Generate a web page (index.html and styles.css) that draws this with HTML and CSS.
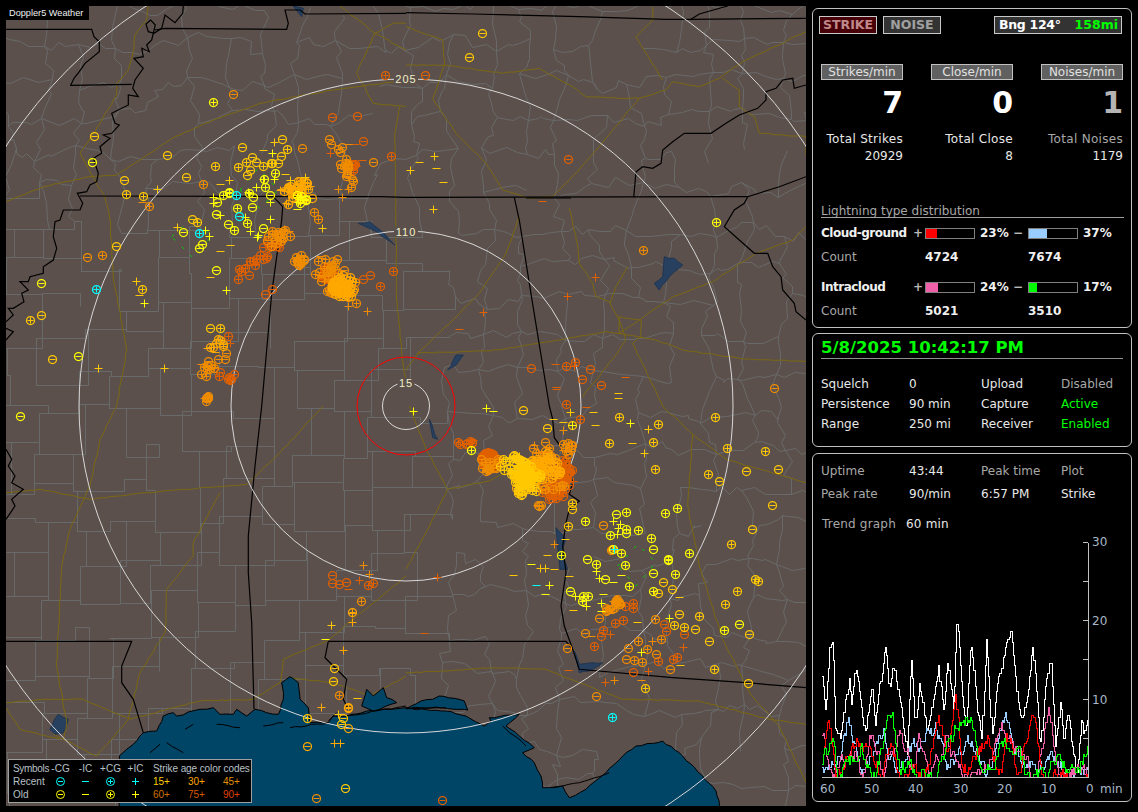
FILE: index.html
```html
<!DOCTYPE html>
<html lang="en">
<head>
    <meta charset="UTF-8">
    <title>Doppler5 Weather - Lightning</title>
    <link rel="stylesheet" href="styles.css">
</head>
<body>
    <div class="map-wrap">
        <svg id="map" class="map" width="800" height="800" viewBox="6 6 800 800"></svg>
        <div class="map-tag">Doppler5 Weather</div>
        <div class="legend">
            <span class="legend-first">Symbols</span><span class="mid">-CG</span><span class="mid">-IC</span><span class="mid">+CG</span><span class="mid">+IC</span><span class="age-title">Strike age color codes</span>
            <span>Recent</span>
            <svg class="sym recent" viewBox="0 0 11 11"><circle cx="5.5" cy="5.5" r="4"/><path d="M3 5.5h5"/></svg>
            <svg class="sym recent" viewBox="0 0 11 11"><path d="M2 5.5h7"/></svg>
            <svg class="sym recent" viewBox="0 0 11 11"><circle cx="5.5" cy="5.5" r="4"/><path d="M3 5.5h5M5.5 3v5"/></svg>
            <svg class="sym recent" viewBox="0 0 11 11"><path d="M2 5.5h7M5.5 2v7"/></svg>
            <span class="age a15">15+</span><span class="age a30">30+</span><span class="age a45">45+</span>
            <span>Old</span>
            <svg class="sym old" viewBox="0 0 11 11"><circle cx="5.5" cy="5.5" r="4"/><path d="M3 5.5h5"/></svg>
            <svg class="sym old" viewBox="0 0 11 11"><path d="M2 5.5h7"/></svg>
            <svg class="sym old" viewBox="0 0 11 11"><circle cx="5.5" cy="5.5" r="4"/><path d="M3 5.5h5M5.5 3v5"/></svg>
            <svg class="sym old" viewBox="0 0 11 11"><path d="M2 5.5h7M5.5 2v7"/></svg>
            <span class="age a60">60+</span><span class="age a75">75+</span><span class="age a90">90+</span>
        </div>
    </div>

    <div class="side">
        <section class="panel panel-counts">
            <div class="status-row">
                <span class="chip chip-strike">STRIKE</span>
                <span class="chip chip-noise">NOISE</span>
                <span class="chip chip-bearing"><span class="bearing">Bng 124°</span><span class="green">158mi</span></span>
            </div>
            <div class="rates">
                <div class="rate">
                    <div class="rate-label">Strikes/min</div>
                    <div class="rate-value">7</div>
                    <div class="rate-total">Total Strikes</div>
                    <div class="rate-count">20929</div>
                </div>
                <div class="rate">
                    <div class="rate-label">Close/min</div>
                    <div class="rate-value">0</div>
                    <div class="rate-total">Total Close</div>
                    <div class="rate-count">8</div>
                </div>
                <div class="rate rate-noise">
                    <div class="rate-label">Noises/min</div>
                    <div class="rate-value">1</div>
                    <div class="rate-total">Total Noises</div>
                    <div class="rate-count">1179</div>
                </div>
            </div>
            <div class="dist-title">Lightning type distribution</div>
            <div class="dist">
                <b class="dist-name">Cloud-ground</b><span class="sign">+</span><span class="bar"><i class="fill-red" style="width:11px"></i></span><b class="pct">23%</b><span class="sign sign-minus">−</span><span class="bar"><i class="fill-blue" style="width:18px"></i></span><b class="pct">37%</b>
                <span class="muted">Count</span><span></span><b>4724</b><span></span><span></span><b>7674</b><span></span>
                <div class="dist-gap"></div>
                <b class="dist-name">Intracloud</b><span class="sign">+</span><span class="bar"><i class="fill-pink" style="width:12px"></i></span><b class="pct">24%</b><span class="sign sign-minus">−</span><span class="bar"><i class="fill-green" style="width:8px"></i></span><b class="pct">17%</b>
                <span class="muted">Count</span><span></span><b>5021</b><span></span><span></span><b>3510</b><span></span>
            </div>
        </section>

        <section class="panel panel-status">
            <div class="clock">5/8/2025 10:42:17 PM</div>
            <div class="info">
                <span>Squelch</span><span>0</span><span>Upload</span><span class="muted">Disabled</span>
                <span>Persistence</span><span>90 min</span><span>Capture</span><span class="green">Active</span>
                <span>Range</span><span>250 mi</span><span>Receiver</span><span class="green">Enabled</span>
            </div>
        </section>

        <section class="panel panel-trend">
            <div class="info info-trend">
                <span class="muted">Uptime</span><span>43:44</span><span class="muted">Peak time</span><span class="muted">Plot</span>
                <span class="muted">Peak rate</span><span>90/min</span><span>6:57 PM</span><span>Strike</span>
            </div>
            <div class="trend-title"><span class="muted">Trend graph</span><span>60 min</span></div>
            <svg id="trend" class="trend" width="320" height="270" viewBox="812 533 320 270"></svg>
        </section>
    </div>
    <script src="script.js"></script>
</body>
</html>
```

FILE: styles.css
```css
* {
    box-sizing: border-box;
}
body {
    margin: 0;
    width: 1138px;
    height: 812px;
    overflow: hidden;
    background-color: #000000;
    color: #e8e8e8;
    font-family: "DejaVu Sans", Verdana, sans-serif;
    font-size: 12px;
    display: flex;
}
.green {
    color: #00ff00;
}
.muted {
    color: #a8a8a8;
}

/* map */
.map-wrap {
    position: relative;
    padding: 6px;
    width: 812px;
    height: 812px;
}
.map {
    display: block;
    background-color: #5c504c;
}
.map-tag {
    position: absolute;
    left: 6px;
    top: 6px;
    width: 83px;
    height: 14px;
    padding-left: 3px;
    background-color: #000000;
    color: #f0f0f0;
    font-family: "Liberation Sans", Arial, sans-serif;
    font-size: 9.2px;
    line-height: 14px;
}
.legend {
    position: absolute;
    left: 8px;
    top: 759px;
    width: 244px;
    height: 44px;
    padding: 2px 0 0 4px;
    background-color: #000000;
    border: 1px solid #a0a0a0;
    color: #b8c0c8;
    font-family: "Liberation Sans", Arial, sans-serif;
    font-size: 10px;
    display: grid;
    grid-template-columns: 35px 25px 25px 25px 25px 35px 35px 35px;
    grid-auto-rows: 13px;
    align-items: center;
}
.legend .mid {
    text-align: center;
}
.legend-first {
    letter-spacing: -0.3px;
}
.age-title {
    grid-column: 6 / 9;
    margin-left: 5px;
    white-space: nowrap;
    letter-spacing: -0.1px;
}
.age {
    margin-left: 5px;
}
.a15 { color: #ffcc00; }
.a30 { color: #ffa500; }
.a45 { color: #e09000; }
.a60 { color: #d07000; }
.a75 { color: #d85800; }
.a90 { color: #e04000; }
.sym {
    width: 11px;
    height: 11px;
    justify-self: center;
    fill: none;
    stroke-width: 1;
}
.sym.recent {
    stroke: #00ffff;
}
.sym.old {
    stroke: #ffff00;
}

/* side column */
.side {
    width: 320px;
    padding-top: 8px;
    display: flex;
    flex-direction: column;
    gap: 5px;
}
.panel {
    border: 1px solid #c0c0c0;
    border-radius: 6px;
    padding: 0 8px;
}
.panel-counts {
    height: 320px;
}
.status-row {
    display: flex;
    gap: 6px;
    margin: 7px 0 0 -2px;
}
.chip {
    height: 18px;
    border: 1px solid #c8c8c8;
    font-weight: bold;
    font-size: 12.5px;
    line-height: 16px;
    text-align: center;
}
.chip-strike {
    width: 58px;
    background-color: #480008;
    color: #c08888;
}
.chip-noise {
    width: 58px;
    background-color: #333333;
    color: #a0a0a0;
}
.chip-bearing {
    width: 128px;
    margin-left: 47px;
    padding: 0 3px 0 4px;
    background-color: #333333;
    color: #ffffff;
    display: flex;
    justify-content: space-between;
}
.bearing {
    letter-spacing: -0.3px;
}
.rates {
    display: grid;
    grid-template-columns: 82px 82px 82px;
    gap: 28px;
    margin-top: 30px;
}
.rate {
    text-align: right;
}
.rate-label {
    height: 16px;
    background-color: #606060;
    border: 1px solid #c0c0c0;
    text-align: center;
    line-height: 14px;
    color: #e0e0e0;
}
.rate-value {
    height: 46px;
    font-size: 30px;
    font-weight: bold;
    line-height: 46px;
    color: #ffffff;
}
.rate-total {
    margin-top: 5px;
    line-height: 17px;
    letter-spacing: 0.3px;
}
.rate-count {
    line-height: 17px;
}
.rate-noise .rate-value {
    color: #b4b4b4;
}
.rate-noise .rate-total {
    color: #a8a8a8;
}
.dist-title {
    margin-top: 39px;
    height: 14px;
    line-height: 15px;
    width: 303px;
    color: #a8a8a8;
    border-bottom: 1px solid #a0a0a0;
}
.dist {
    display: grid;
    grid-template-columns: 92px 12px 50px 44px 9px 50px auto;
    grid-template-rows: 24px 24px 6px 24px 24px;
    align-items: center;
    margin-top: 3px;
    color: #f0f0f0;
}
.dist-gap {
    grid-column: 1 / -1;
}
.dist-name {
    letter-spacing: -0.5px;
}
.pct {
    padding-left: 5px;
}
.sign {
    color: #b8b8b8;
    font-weight: bold;
}
.sign-minus {
    margin-left: -6px;
}
.bar {
    display: block;
    height: 11px;
    border: 1px solid #808080;
}
.bar i {
    display: block;
    height: 100%;
}
.fill-red { background-color: #ff0000; }
.fill-blue { background-color: #99ccff; }
.fill-pink { background-color: #f060a8; }
.fill-green { background-color: #00ff00; }
.panel-status {
    height: 114px;
}
.clock {
    height: 24px;
    margin-top: 1px;
    padding-top: 2px;
    width: 302px;
    color: #00ff00;
    font-size: 16.5px;
    font-weight: bold;
    line-height: 22px;
    border-bottom: 1px solid #909090;
}
.info {
    display: grid;
    grid-template-columns: 88px 72px 80px auto;
    grid-auto-rows: 20px;
    align-items: center;
    margin-top: 15px;
}
.panel-trend {
    height: 349px;
    margin-top: 1px;
    position: relative;
}
.info-trend {
    grid-auto-rows: 23px;
    margin-top: 5px;
}
.trend-title {
    display: flex;
    gap: 10px;
    margin: 8px 0 0 1px;
    line-height: 23px;
    letter-spacing: 0.2px;
}
.trend {
    position: absolute;
    left: -1px;
    top: 79px;
    font-size: 12px;
}
.trend path {
    shape-rendering: crispEdges;
}
```

FILE: script.js
```js
// Everything is traced from 3x crops of the four map quadrants, so coords are crop px
const NS = 'http://www.w3.org/2000/svg';
const QUAD = { nw: [0, 0], ne: [406, 0], sw: [0, 406], se: [406, 406] };

let seed = 20929;
function rnd() {
    seed = (seed * 16807) % 2147483647;
    return seed / 2147483647;
}

function addPath(svg, d, stroke, fill, width, extra) {
    const p = document.createElementNS(NS, 'path');
    p.setAttribute('d', d);
    p.setAttribute('stroke', stroke);
    p.setAttribute('fill', fill || 'none');
    p.setAttribute('stroke-width', width || 1);
    if (extra) Object.keys(extra).forEach(k => p.setAttribute(k, extra[k]));
    svg.appendChild(p);
    return p;
}

function points(q, str) {
    const [ox, oy] = QUAD[q];
    return str.trim().split(/\s+/).map(s => {
        const [x, y] = s.split(',').map(Number);
        return [ox + x / 3, oy + y / 3];
    });
}

// splits each segment and shakes it a little, so coasts and lakes don't look ruled
function roughen(pts, amount) {
    const out = [];
    pts.forEach((p, i) => {
        out.push(p);
        const n = pts[i + 1];
        if (!n) return;
        const len = Math.hypot(n[0] - p[0], n[1] - p[1]);
        const parts = Math.floor(len / 5);
        for (let k = 1; k < parts; k++) {
            out.push([
                p[0] + (n[0] - p[0]) * k / parts + (rnd() - 0.5) * amount,
                p[1] + (n[1] - p[1]) * k / parts + (rnd() - 0.5) * amount
            ]);
        }
    });
    return out;
}

function toPath(pts, close) {
    return 'M' + pts.map(p => p[0].toFixed(1) + ' ' + p[1].toFixed(1)).join('L') + (close ? 'Z' : '');
}

const map = document.getElementById('map');

// counties: jittered grid, ruled in the west, wobbly toward the east
function drawCounties() {
    const step = 37;
    const nodes = {};
    for (let i = 0; i <= 22; i++) {
        for (let j = 0; j <= 22; j++) {
            nodes[i + ',' + j] = [i * step + (rnd() - 0.5) * 20, j * step + (rnd() - 0.5) * 20];
        }
    }
    let d = '';
    function edge(a, b) {
        d += 'M' + a[0].toFixed(0) + ' ' + a[1].toFixed(0);
        if (a[0] < 420 && a[1] > 190) {
            d += 'L' + b[0].toFixed(0) + ' ' + a[1].toFixed(0) + 'L' + b[0].toFixed(0) + ' ' + b[1].toFixed(0);
            return;
        }
        for (let k = 1; k <= 4; k++) {
            const wob = k === 4 ? 0 : 10;
            const x = a[0] + (b[0] - a[0]) * k / 4 + (rnd() - 0.5) * wob;
            const y = a[1] + (b[1] - a[1]) * k / 4 + (rnd() - 0.5) * wob;
            d += 'L' + x.toFixed(0) + ' ' + y.toFixed(0);
        }
    }
    for (let i = 0; i < 22; i++) {
        for (let j = 0; j < 22; j++) {
            if (rnd() < 0.8) edge(nodes[i + ',' + j], nodes[(i + 1) + ',' + j]);
            if (rnd() < 0.8) edge(nodes[i + ',' + j], nodes[i + ',' + (j + 1)]);
        }
    }
    addPath(map, d, '#686a6a', 'none', 1, { transform: 'translate(6.5 6.5)' });
}

const ROADS = {
    nw: ['445,18 440,60 405,105 400,155 385,210 350,250 350,285 300,370 240,460 275,525 315,590 330,660 340,830 380,1050 350,1218',
        '18,605 130,560 270,530 350,525 525,410 640,360 780,310 1000,270 1218,240',
        '1218,320 1120,310 1070,220 1125,100 1180,70 1218,70',
        '1020,18 1125,100 1218,150', '1200,320 1185,400 1190,900 1210,1100 1218,1140'],
    ne: ['0,80 110,120 115,195 80,295 150,400 240,490 290,570 370,595 440,590 490,540 580,440 700,295 780,270 800,245 880,260 940,235 1010,185 1200,95',
        '0,195 115,195 290,220 400,205 500,260 540,290 640,295 700,295',
        '740,20 740,60 690,110 770,240', '950,235 1000,270 1000,320 1045,350 1060,400 1200,410 1200,465',
        '340,650 300,760 220,880 140,960 35,1060 0,1110', '490,625 515,735 520,790 560,850 570,890 610,905 640,960 660,1020 640,1050 530,1190',
        '665,800 630,860 612,910', '35,1060 280,1050 600,995 750,1020 830,1050 1000,1075 1200,1085',
        '1200,680 1160,720 1050,760 920,845 800,890 700,960 640,1000 640,950 705,960 705,1010 680,1030 770,1218'],
    sw: ['350,0 300,100 270,240 210,370 185,480 170,780 200,950 190,1000',
        '18,260 120,250 270,280 440,260 740,235 830,150 970,0', '660,260 580,410 580,450 500,550 495,680 420,800 385,940 290,1050 160,985',
        '18,890 130,880 250,880 390,940 600,885 760,880 840,830 850,760 980,705 1120,590 1218,510',
        '870,815 1000,830 1110,870 1218,810', '18,905 60,970 180,1000'],
    se: ['0,800 120,795 260,785 420,790 520,830 650,880 880,885 1090,940 1200,955',
        '125,250 100,300 60,380 0,490', '770,0 860,85 845,300 880,480 950,700 1030,860 1120,960 1200,1130',
        '860,85 960,160 1200,230', '10,0 60,130 125,250 250,225 330,180 420,160']
};

const STATES = {
    nw: ['18,88 275,88 282,110 298,125 298,155 255,190 238,215 222,235 212,256 395,253',
        '550,18 548,40 525,68 495,45 485,85 462,100 445,95 438,72 452,60 466,75 455,120 440,135 448,155 425,145 430,170 402,175 430,205 405,240 398,265 415,290 385,285 385,315 335,340 345,370 358,375 335,400 310,405 330,415 300,440 305,460 280,475 295,520 290,545 270,555 260,575 232,580 248,610 240,630 190,630 180,660 165,665 160,710 170,745 160,780 130,800 130,820 90,830 85,845 60,845 85,870 65,880 72,905 40,925 25,925 40,945 18,965',
        '18,985 40,995 18,1020', '465,90 495,85 860,88 865,70 855,30 900,30 915,42 1218,40',
        '240,588 1140,590 1218,592', '820,590 848,620 845,660 830,770 815,880 785,1218'],
    ne: ['0,38 200,42 520,50 780,58 850,58 1200,55', '855,58 880,42 965,18', '0,592 1025,590 1120,560 1200,530',
        '360,594 495,594', '325,592 340,660 370,850 430,1218',
        '683,592 690,515 710,500 740,505 765,490 770,450 800,425 835,400 915,400 960,370 1000,345 1055,325 1080,300 1080,275 1110,265 1130,240 1160,235 1165,265 1200,255',
        '1025,590 1015,610 985,630 955,680 1000,720 1045,760 1085,760 1100,800 1125,830 1130,870 1165,910 1170,935 1200,960'],
    sw: ['785,0 765,180 745,390 745,500 755,650 762,910', '18,706 395,706 365,780 365,830 400,880 430,980',
        '18,130 35,160 25,180 45,210 35,230 70,250 35,280 45,300 18,340', '985,706 1218,706', '985,706 975,755 1040,820 1030,880 1045,910'],
    se: ['0,706 480,706 500,730 520,790 800,815 1020,830 1200,845',
        '430,0 440,40 445,95 470,130 500,230 490,265 520,285 490,310 480,350 470,420 480,500 465,600 475,660 500,730']
};

// the gulf crosses two quadrants: west coast, then east coast, closed along the bottom
const GULF_W = '358,1218 358,1050 380,1030 400,1015 430,980 470,975 490,930 520,920 530,930 600,910 640,905 660,925 700,925 710,910 740,930 765,910 800,920 835,925 850,880 845,830 870,812 895,830 900,880 925,905 930,950 985,950 1000,930 1040,930 1100,915 1218,905';
const GULF_E = '0,908 120,915 180,930 235,960 255,945 250,935 340,925 300,960 340,990 385,1025 350,1040 385,1070 405,1110 410,1145 430,1145 470,1140 490,1175 540,1150 600,1100 650,1050 690,1020 770,1005 830,1050 890,1110 930,1155 945,1218';
const BAYS = [
    ['sw', '1085,900 1100,850 1120,870 1150,845 1160,875 1190,890 1120,915'],
    ['se', '0,908 45,885 80,880 100,870 175,885 185,912 110,905']
];

const LAKES = {
    nw: ['1075,670 1110,665 1140,690 1185,735 1130,695', '880,18 905,50 910,25'],
    ne: ['775,770 805,775 830,795 790,830 760,870 745,850 770,830', '125,1110 150,1065 172,1065 150,1095'],
    sw: ['150,970 175,925 205,940 190,980 165,985'],
    se: ['70,40 82,70 95,100 80,95', '450,365 480,400 465,440 485,490 462,490', '505,735 520,775 560,770 590,770 550,795 520,800']
};

// land slivers and barrier islands inside the gulf
const ISLANDS = {
    sw: ['650,955 720,965', '790,960 850,950', '555,970 580,955', '870,965 985,950', '500,1010 550,1040', '450,1040 480,1015', '1040,930 1218,900', '985,945 1010,920'],
    se: ['0,905 120,905', '290,960 360,1020', '440,1145 520,1130 610,1100']
};

function drawMapLines() {
    Object.keys(LAKES).forEach(q => LAKES[q].forEach(s => {
        addPath(map, toPath(roughen(points(q, s), 1.5), true), '#1f3550', '#27405f');
    }));
    Object.keys(ROADS).forEach(q => ROADS[q].forEach(s => {
        addPath(map, toPath(roughen(points(q, s), 1)), '#7a6810');
    }));
    const gulf = roughen(points('sw', GULF_W).concat(points('se', GULF_E)), 1.5);
    addPath(map, toPath(gulf, true), '#000000', '#004466');
    BAYS.forEach(b => addPath(map, toPath(roughen(points(b[0], b[1]), 1.5), true), '#000000', '#004466'));
    Object.keys(ISLANDS).forEach(q => ISLANDS[q].forEach(s => {
        addPath(map, toPath(roughen(points(q, s), 1.5)), '#000000');
    }));
    Object.keys(STATES).forEach(q => STATES[q].forEach(s => {
        addPath(map, toPath(points(q, s)), '#000000', 'none', 1.2);
    }));
}

function drawRings() {
    const rings = [[23.5, '#d8d8d8'], [49, '#ff0000'], [175, '#d8d8d8'], [327, '#d8d8d8'], [477, '#d8d8d8']];
    rings.forEach(r => {
        const c = document.createElementNS(NS, 'circle');
        c.setAttribute('cx', 406);
        c.setAttribute('cy', 406);
        c.setAttribute('r', r[0]);
        c.setAttribute('fill', 'none');
        c.setAttribute('stroke', r[1]);
        map.appendChild(c);
    });
    [['15', 383], ['110', 232], ['205', 79]].forEach(l => {
        const w = l[0].length * 7 + 3;
        const bg = document.createElementNS(NS, 'rect');
        bg.setAttribute('x', 406 - w / 2);
        bg.setAttribute('y', l[1] - 5);
        bg.setAttribute('width', w);
        bg.setAttribute('height', 10);
        bg.setAttribute('fill', '#5c504c');
        map.appendChild(bg);
        const t = document.createElementNS(NS, 'text');
        t.setAttribute('x', 406);
        t.setAttribute('y', l[1] + 4);
        t.setAttribute('text-anchor', 'middle');
        t.setAttribute('fill', '#f0f0c8');
        t.setAttribute('font-family', 'Liberation Sans');
        t.setAttribute('font-size', '11');
        t.setAttribute('letter-spacing', '1');
        t.textContent = l[0];
        map.appendChild(t);
    });
    [['nw', '515,710 580,650 635,710 575,770'], ['nw', '720,570 775,505 835,570 780,625'], ['se', '635,480 695,415 750,470 690,540']].forEach(g => {
        addPath(map, toPath(points(g[0], g[1]), true), '#00d000', 'none', 1, { 'stroke-dasharray': '3 9' });
    });
}

const COLORS = { Y: '#ffff00', G: '#ffc800', A: '#ffa800', O: '#f08c00', D: '#e06000', C: '#00ffff' };
const ORDER = ['D', 'O', 'A', 'G', 'Y', 'C'];

// p circle-plus, m circle-minus, + plus, - minus
function addGlyph(out, kind, x, y) {
    x = Math.round(x) + 0.5;
    y = Math.round(y) + 0.5;
    if (kind === 'p' || kind === 'm') {
        out.rings += 'M' + (x - 4) + ' ' + y + 'a4 4 0 1 0 8 0a4 4 0 1 0 -8 0';
        out.lines += 'M' + (x - 3) + ' ' + y + 'h6';
        if (kind === 'p') out.lines += 'M' + x + ' ' + (y - 3) + 'v6';
    } else {
        out.lines += 'M' + (x - 4) + ' ' + y + 'h8';
        if (kind === '+') out.lines += 'M' + x + ' ' + (y - 4) + 'v8';
    }
}

const STRIKES = {
    nw: {
        D: 'm997,350 m1070,349 m1090,424 p1172,468 p1180,812 p1141,858 m1110,826 m1088,838 m795,883 m815,868 p715,838 m748,826 +989,460 p1156,226 -1065,432 -1085,481 p685,1008 +690,1028',
        O: 'p610,553 m700,283 p448,617 m907,445 p307,764 m262,772 +1102,932 +1045,917 +1015,568 m1120,487 +1025,590 m988,417 m994,432 m1025,440 p943,637 p955,658 -425,605',
        G: 'm283,407 m500,465 m373,541 p379,583 p430,589 +472,568 m348,737 m157,1078 p91,961 m124,946 m557,532 p646,498 m727,440 m757,472 p737,487 p715,502 m768,487 m750,510 m742,525 p790,497 p812,489 p815,490 m835,490 m843,468 p862,448 m847,416 +295,1105 +493,1105 +408,842 -418,885 p661,985 m631,985 -660,552 -790,450 -855,522 -690,735 -660,753 +870,540 +915,530 +823,425 +965,685 +530,680 m575,658 p590,665 -630,832 p427,868 +687,540',
        Y: 'p640,306 m275,487 m124,850 m235,1067 +679,871 m649,810 p703,690 m685,673 +749,693 +771,710 +774,706 +809,656 m790,683 p740,670 +660,645 m649,643 m650,606 p670,585 p688,575 m687,580 +640,590 +638,610 m756,620 +735,650 p712,625 +745,575 p748,578 +768,560 m758,590 +790,538 p792,538 p795,562 m810,585 +810,605 +822,538 +817,460 p825,520 +900,590 +895,605 -890,627 m550,695 +615,690 +628,707 m605,733 m598,745 +433,910',
        C: 'p289,866 p598,700 p708,586 m717,647'
    },
    ne: {
        D: 'm58,226 m487,478 +568,832 +484,889 +232,937 -160,988 m375,1105 -448,1093 p480,1099 p507,1085 +505,1097 m553,1108 m529,1138 m586,1156 -658,1130 -451,1160 -451,1168 -408,604 p480,1213',
        O: 'p712,751 m1105,1165',
        G: 'm229,100 m190,172 +85,469 -40,487 -90,505 -110,547 +12,511 +82,628 -635,1180 -635,1195',
        Y: 'p931,667'
    },
    sw: {
        D: 'm997,507 m997,530 m1018,535 m1037,527 p1105,538 p1118,532 -1045,549 +1078,522',
        O: '+1090,478 +1107,505 p1084,586 p1018,868 m949,1177',
        A: 'p1057,617 +1057,622 +1057,647 +1030,733 +963,904 +1003,1010 +1020,1010 m922,1021 p1043,903 m1043,905 m1045,967',
        G: '+994,658 m1003,787 m1000,825 -1072,877 +1015,925 m1030,937 m1022,955 p922,937 m1036,1147',
        Y: 'm61,31 -976,700'
    },
    se: {
        D: 'm107,1183 m680,798 p563,720 p592,672 p628,652 p650,643 p680,590 p680,607 p658,600 +612,685 +596,828 m586,690 -487,793 p812,752 p800,760 +830,724 +727,795 -55,682 +92,514 p523,40 m775,655 m780,675 p755,765 m835,685 -540,3',
        O: 'm590,358 m614,432 p618,428 p748,640 +445,414 m484,725 m538,680 p697,705 m571,871 m793,790 p764,700 +737,705 m580,635 m600,615 m630,590 p625,605 m667,727 m660,758 p685,763 p707,768 p722,730 m750,745 +470,72 +625,823 -705,823 -555,690',
        G: 'p640,34 p757,55 p610,112 p742,109 p748,190 p928,32 p962,127 p1078,135 m1021,196 m1117,190 p907,203 m940,226 m1099,298 m1039,370 p976,415 p1047,520 p1056,525 p993,555 p958,595 m1030,685 m910,706 p880,630 m868,669 p835,664 m820,625 p805,658 m798,549 m772,529 m755,562 p487,361 p497,290 m497,308 p718,847 m1027,832 m424,67 p499,58 p925,790 +725,68 +715,140 -568,58 -677,110 +493,18 -560,18 m352,13 -470,48 -440,40 -422,448 -478,400 -320,507 -694,649 -820,574 -823,777 +402,485 +418,485 -443,488 -490,510 -500,612',
        Y: 'p538,346 m631,325 p661,319 +620,345 +642,355 +635,365 p660,370 m660,382 p613,388 p695,371 +632,385 p736,397 m742,430 p646,442 p850,442 p787,458 p787,463 p808,505 m742,500 p658,476 p570,473 +570,495 +578,515 m598,520 m544,460 p670,541 p740,556 m493,556 +508,570 p530,570 p545,570 p527,585 +540,600 p778,322 p814,307 m1000,655 p955,673 p466,446 +673,52 +498,58 +241,5 -260,15 +22,15 +430,537 -418,565 -375,475 +705,738 +790,636 -645,507 -622,528 -590,565 -585,615 +584,590 p195,132 p620,430',
        C: 'p619,934 +624,430 -390,538'
    }
};

// clusters: [quad, color, x1,y1, x2,y2, spread, count]
const CLUSTERS = [
    ['nw', 'A', 865, 580, 920, 570, 34, 36],
    ['nw', 'Y', 885, 592, 910, 598, 18, 6],
    ['nw', 'O', 1030, 440, 1052, 590, 18, 22],
    ['nw', 'D', 1050, 490, 1060, 505, 14, 8],
    ['nw', 'O', 980, 800, 1040, 880, 46, 60],
    ['nw', 'A', 1015, 850, 1040, 860, 36, 45],
    ['nw', 'D', 975, 820, 985, 825, 20, 45],
    ['nw', 'O', 820, 720, 855, 700, 26, 22],
    ['nw', 'D', 800, 730, 835, 740, 24, 10],
    ['nw', 'O', 890, 790, 905, 775, 16, 14],
    ['nw', 'D', 725, 810, 800, 765, 14, 14],
    ['nw', 'A', 660, 1025, 630, 1050, 18, 10],
    ['nw', 'O', 665, 1070, 600, 1120, 22, 16],
    ['nw', 'O', 618, 1192, 622, 1195, 9, 7],
    ['nw', 'D', 640, 1130, 710, 1130, 16, 8],
    ['se', 'D', 135, 110, 210, 108, 7, 10],
    ['se', 'D', 248, 160, 250, 162, 24, 100],
    ['se', 'O', 220, 170, 280, 180, 24, 18],
    ['se', 'G', 310, 170, 380, 230, 36, 70],
    ['se', 'A', 340, 220, 430, 180, 44, 90],
    ['se', 'G', 350, 215, 370, 225, 22, 35],
    ['se', 'O', 410, 130, 440, 250, 38, 50],
    ['se', 'D', 470, 170, 480, 220, 24, 40],
    ['se', 'O', 480, 125, 495, 130, 20, 12],
    ['se', 'D', 420, 255, 460, 250, 26, 45],
    ['se', 'G', 340, 255, 345, 258, 12, 8],
    ['se', 'O', 375, 297, 410, 300, 5, 6],
    ['se', 'O', 600, 610, 640, 585, 12, 12]
];

function drawStrikes() {
    const out = {};
    ORDER.forEach(c => { out[c] = { rings: '', lines: '' }; });
    CLUSTERS.forEach(cl => {
        const [q, color, x1, y1, x2, y2, spread, count] = cl;
        const [ox, oy] = QUAD[q];
        for (let i = 0; i < count; i++) {
            const t = rnd();
            const ang = rnd() * 6.283;
            const r = Math.sqrt(rnd()) * spread;
            const x = x1 + (x2 - x1) * t + Math.cos(ang) * r;
            const y = y1 + (y2 - y1) * t + Math.sin(ang) * r;
            const pick = rnd();
            const kind = pick < 0.55 ? 'p' : pick < 0.8 ? 'm' : pick < 0.93 ? '+' : '-';
            addGlyph(out[color], kind, ox + x / 3, oy + y / 3);
        }
    });
    ORDER.forEach(c => {
        Object.keys(STRIKES).forEach(q => {
            const list = STRIKES[q][c];
            if (!list) return;
            const [ox, oy] = QUAD[q];
            list.split(' ').forEach(s => {
                const [x, y] = s.slice(1).split(',').map(Number);
                addGlyph(out[c], s[0], ox + x / 3, oy + y / 3);
            });
        });
    });
    ORDER.forEach(c => {
        addPath(map, out[c].rings, COLORS[c], 'none', 1.25);
        addPath(map, out[c].lines, COLORS[c]);
    });
}

// trend graph, anchors in crop px too
const trend = document.getElementById('trend');
const WHITE = [[30, 315], [34, 340], [40, 430], [55, 225], [62, 225], [70, 460], [85, 500], [100, 410], [112, 320], [118, 400], [130, 295], [145, 400], [160, 500], [180, 345], [190, 470], [205, 350], [222, 225], [232, 360], [243, 270], [262, 380], [285, 545], [298, 270], [310, 450], [322, 340], [345, 500], [380, 295], [395, 420], [408, 270], [425, 420], [435, 150], [450, 340], [462, 470], [477, 200], [495, 410], [510, 520], [523, 200], [540, 490], [560, 320], [576, 250], [596, 175], [615, 370], [630, 470], [650, 340], [663, 225], [685, 530], [700, 350], [716, 270], [730, 530], [745, 390], [755, 510], [767, 435], [785, 560], [795, 600], [810, 435], [815, 500], [828, 420]];
const SERIES = [
    ['#99ccff', [[30, 590], [70, 620], [108, 458], [150, 625], [212, 485], [250, 620], [300, 540], [330, 510], [370, 480], [400, 590], [480, 510], [520, 620], [580, 458], [640, 610], [705, 560], [760, 590], [790, 620], [828, 580]]],
    ['#f060a8', [[30, 490], [60, 610], [130, 530], [150, 620], [175, 480], [215, 620], [265, 480], [300, 600], [320, 505], [350, 620], [400, 520], [450, 620], [500, 610], [570, 490], [630, 550], [670, 620], [710, 410], [740, 620], [800, 600]]],
    ['#ff0000', [[30, 590], [50, 480], [70, 620], [135, 505], [180, 550], [210, 620], [235, 500], [260, 620], [340, 610], [380, 460], [410, 530], [432, 365], [450, 620], [525, 505], [560, 625], [585, 500], [620, 620], [665, 410], [690, 620], [760, 620], [800, 625]]],
    ['#00ff00', [[30, 590], [60, 500], [80, 625], [145, 530], [190, 620], [240, 410], [260, 580], [320, 610], [365, 620], [440, 460], [475, 435], [510, 625], [560, 550], [610, 510], [640, 620], [700, 625], [740, 550], [790, 620], [828, 530]]]
];

function traceSeries(anchors, noise) {
    let d = '';
    let i = 0;
    let wander = 0;
    for (let zx = 30; zx <= 828; zx += 3.4) {
        while (i < anchors.length - 2 && anchors[i + 1][0] < zx) i++;
        const a = anchors[i];
        const b = anchors[i + 1];
        const t = Math.min(1, Math.max(0, (zx - a[0]) / (b[0] - a[0])));
        wander = wander * 0.65 + (rnd() - 0.5) * noise;
        const zy = Math.min(622, a[1] + (b[1] - a[1]) * t + wander);
        // values step by about 1/3 of a strike
        const y = Math.round((570 + zy / 3) / 2.6) * 2.6;
        const x = 812 + zx / 3;
        d += (d ? 'H' + x.toFixed(1) + 'V' + y.toFixed(1) : 'M' + x.toFixed(1) + ' ' + y.toFixed(1));
    }
    return d;
}

function drawTrend() {
    addPath(trend, traceSeries(WHITE, 24), '#ffffff');
    SERIES.forEach(s => addPath(trend, traceSeries(s[1], 40), s[0]));
    addPath(trend, 'M1088.5 542.5V777.5H822M1083 542.5h5M1083 581.5h5M1083 620.5h5M1083 659.5h5M1083 699.5h5M1083 738.5h5', '#c0c0c0');
    [['30', 1092, 546], ['20', 1092, 625], ['10', 1092, 704]].concat(
        [['60', 820, 793], ['50', 864, 793], ['40', 908, 793], ['30', 953, 793], ['20', 997, 793], ['10', 1041, 793], ['0', 1086, 793], ['min', 1100, 793]]
    ).forEach(l => {
        const t = document.createElementNS(NS, 'text');
        t.setAttribute('x', l[1]);
        t.setAttribute('y', l[2]);
        t.setAttribute('fill', '#a8b8c8');
        t.textContent = l[0];
        trend.appendChild(t);
    });
}

drawCounties();
drawMapLines();
drawRings();
drawStrikes();
drawTrend();
```
